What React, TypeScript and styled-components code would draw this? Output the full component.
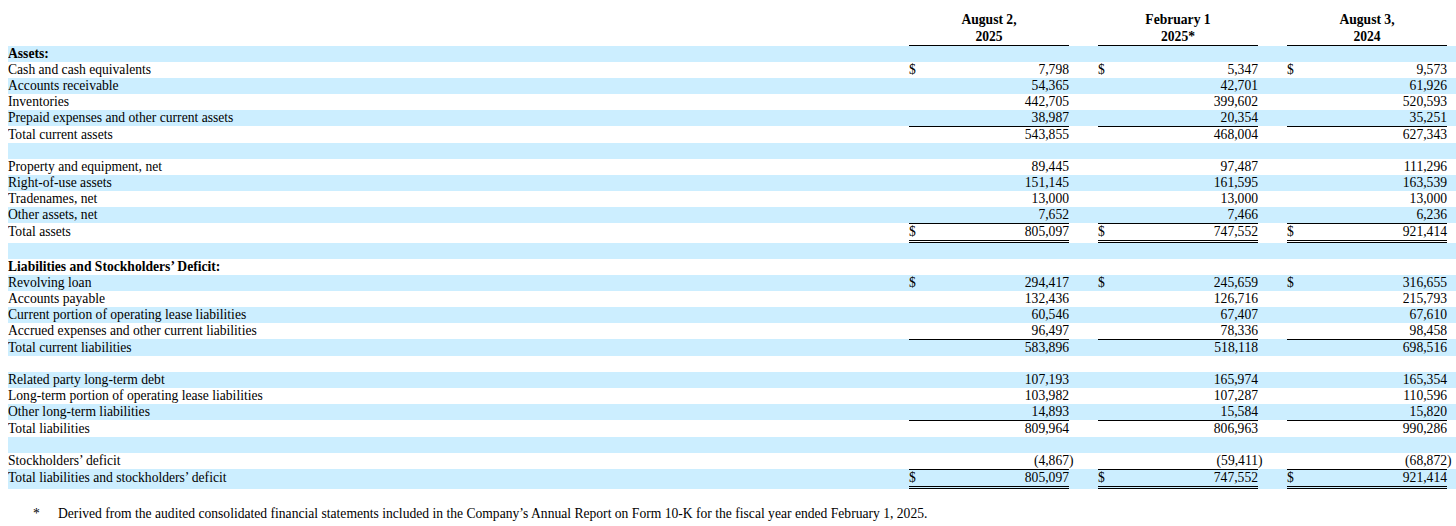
import React from 'react';
import styled, { createGlobalStyle } from 'styled-components';

const GlobalStyle = createGlobalStyle`
  html {
    background: #fff;
    overflow: hidden;
  }
  body {
    margin: 8px 0 8px 8px;
    font-family: 'Liberation Serif', 'Times New Roman', serif;
    font-size: 13.6px;
    color: #000;
  }
`;

// label column, then three (amount, tail) pairs; the last tail runs to the page edge
const COLS = '901px 160px 29px 160px 29px 160px 1fr';

const Sheet = styled.div`
  width: 100%;
`;

const HeaderRow = styled.div`
  display: grid;
  grid-template-columns: ${COLS};
  padding-top: 3px;
`;

const HeaderCell = styled.div<{ $col: number }>`
  grid-column: ${(p) => p.$col};
  font-weight: bold;
  text-align: center;
  line-height: 17px;
  border-bottom: 1px solid #000;
`;

const Row = styled.div<{ $shade: boolean }>`
  display: grid;
  grid-template-columns: ${COLS};
  min-height: 16px;
  line-height: 16px;
  background: ${(p) => (p.$shade ? '#cceeff' : 'transparent')};
`;

const Label = styled.div<{ $bold?: boolean; $offset: number }>`
  padding-top: ${(p) => p.$offset}px;
  font-weight: ${(p) => (p.$bold ? 'bold' : 'normal')};
  white-space: nowrap;
`;

const Amount = styled.div<{ $rule?: Rule }>`
  display: flex;
  justify-content: space-between;
  white-space: nowrap;
  border-top: ${(p) => (p.$rule ? '1px solid #000' : 'none')};
  border-bottom: ${(p) => (p.$rule === 'total' ? '3px double #000' : 'none')};
`;

const Tail = styled.div<{ $offset: number }>`
  padding-top: ${(p) => p.$offset}px;
`;

const Footnote = styled.div`
  display: flex;
  margin-top: 17px;
  line-height: 16px;
`;

const Mark = styled.span`
  width: 25px;
  padding-left: 25px;
`;

type Rule = 'sub' | 'total';

type Line = {
  label?: string;
  bold?: boolean;
  values?: [string, string, string];
  dollar?: boolean;
  rule?: Rule;
};

const lines: Line[] = [
  { label: 'Assets:', bold: true },
  { label: 'Cash and cash equivalents', values: ['7,798', '5,347', '9,573'], dollar: true },
  { label: 'Accounts receivable', values: ['54,365', '42,701', '61,926'] },
  { label: 'Inventories', values: ['442,705', '399,602', '520,593'] },
  { label: 'Prepaid expenses and other current assets', values: ['38,987', '20,354', '35,251'] },
  { label: 'Total current assets', values: ['543,855', '468,004', '627,343'], rule: 'sub' },
  {},
  { label: 'Property and equipment, net', values: ['89,445', '97,487', '111,296'] },
  { label: 'Right-of-use assets', values: ['151,145', '161,595', '163,539'] },
  { label: 'Tradenames, net', values: ['13,000', '13,000', '13,000'] },
  { label: 'Other assets, net', values: ['7,652', '7,466', '6,236'] },
  { label: 'Total assets', values: ['805,097', '747,552', '921,414'], dollar: true, rule: 'total' },
  {},
  { label: 'Liabilities and Stockholders\u2019 Deficit:', bold: true },
  { label: 'Revolving loan', values: ['294,417', '245,659', '316,655'], dollar: true },
  { label: 'Accounts payable', values: ['132,436', '126,716', '215,793'] },
  { label: 'Current portion of operating lease liabilities', values: ['60,546', '67,407', '67,610'] },
  { label: 'Accrued expenses and other current liabilities', values: ['96,497', '78,336', '98,458'] },
  { label: 'Total current liabilities', values: ['583,896', '518,118', '698,516'], rule: 'sub' },
  {},
  { label: 'Related party long-term debt', values: ['107,193', '165,974', '165,354'] },
  { label: 'Long-term portion of operating lease liabilities', values: ['103,982', '107,287', '110,596'] },
  { label: 'Other long-term liabilities', values: ['14,893', '15,584', '15,820'] },
  { label: 'Total liabilities', values: ['809,964', '806,963', '990,286'], rule: 'sub' },
  {},
  { label: 'Stockholders\u2019 deficit', values: ['(4,867)', '(59,411)', '(68,872)'] },
  { label: 'Total liabilities and stockholders\u2019 deficit', values: ['805,097', '747,552', '921,414'], dollar: true, rule: 'total' },
];

const headers = [
  ['August 2,', '2025'],
  ['February 1', '2025*'],
  ['August 3,', '2024'],
];

const splitParen = (v: string) => (v.endsWith(')') ? [v.slice(0, -1), ')'] : [v, '']);

const StatementRow = ({ line, shade }: { line: Line; shade: boolean }) => {
  const offset = line.rule ? 1 : 0;
  return (
    <Row $shade={shade}>
      <Label $bold={line.bold} $offset={offset}>{line.label}</Label>
      {[0, 1, 2].map((i) => {
        const [num, paren] = line.values ? splitParen(line.values[i]) : ['', ''];
        return (
          <React.Fragment key={i}>
            <Amount $rule={line.rule}>
              <span>{line.dollar ? '$' : ''}</span>
              <span>{num}</span>
            </Amount>
            <Tail $offset={offset}>{paren}</Tail>
          </React.Fragment>
        );
      })}
    </Row>
  );
};

const App = () => (
  <>
    <GlobalStyle />
    <Sheet>
      <HeaderRow>
        {headers.map(([a, b], i) => (
          <HeaderCell key={a} $col={2 + i * 2}>
            {a}
            <br />
            {b}
          </HeaderCell>
        ))}
      </HeaderRow>
      {lines.map((line, i) => (
        <StatementRow key={i} line={line} shade={i % 2 === 0} />
      ))}
      <Footnote>
        <Mark>*</Mark>
        <span>
          Derived from the audited consolidated financial statements included in the Company’s Annual Report on
          Form 10-K for the fiscal year ended February 1, 2025.
        </span>
      </Footnote>
    </Sheet>
  </>
);

export default App;
